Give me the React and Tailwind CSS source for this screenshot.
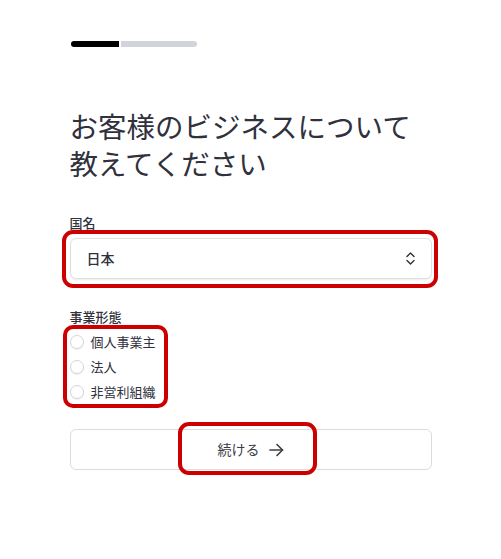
import React from "react";

function Chevrons() {
  return (
    <svg width="9" height="13" viewBox="0 0 9 13" fill="none" stroke="#30313d" strokeWidth="1.4" strokeLinecap="round" strokeLinejoin="round">
      <path d="M1 4.5 L4.5 1 L8 4.5" />
      <path d="M1 8.5 L4.5 12 L8 8.5" />
    </svg>
  );
}

function Arrow() {
  return (
    <svg width="15" height="14" viewBox="0 0 15 14" fill="none" stroke="#3c3c44" strokeWidth="1.6" strokeLinecap="round" strokeLinejoin="round">
      <path d="M1 7 H13.5" />
      <path d="M8 1.5 L13.5 7 L8 12.5" />
    </svg>
  );
}

function Radio({ label }) {
  return (
    <div className="flex h-[25px] items-center gap-[7px]">
      <span className="h-[14px] w-[14px] rounded-full border border-[#d5d5d9] bg-white shadow-[0_1px_1px_rgba(0,0,0,0.06)]" />
      <span className="text-[13px] leading-4 text-[#30313d]">{label}</span>
    </div>
  );
}

export default function App() {
  return (
    <div
      className="min-h-[559px] w-full bg-white"
      style={{ fontFamily: '"Noto Sans CJK JP", "Noto Sans", sans-serif' }}
    >
      <div className="mx-auto flex w-[362px] flex-col pt-[41px]">
        <div className="ml-[1px] flex h-[6px] w-[126px] overflow-hidden rounded-full">
          <div className="h-full w-[48px] bg-black" />
          <div className="h-full w-[2px] bg-white" />
          <div className="h-full flex-1 bg-[#d1d5db]" />
        </div>

        <h1 className="mt-[60px] text-[28.5px] font-normal leading-[37px] text-[#30313d]">
          お客様のビジネスについて
          <br />
          教えてください
        </h1>

        <div className="mt-[34px] text-[13px] font-medium leading-4 text-[#30313d]">国名</div>

        <div className="relative mt-[7px]">
          <div className="flex h-[41px] items-center justify-between rounded-md border border-[#e0e0e3] bg-white pl-[16px] pr-[16px] shadow-[0_1px_2px_rgba(0,0,0,0.08)]">
            <span className="text-[14px] font-medium text-[#30313d]">日本</span>
            <Chevrons />
          </div>
          <div className="pointer-events-none absolute left-[-8px] right-[-6px] top-[-8px] bottom-[-9px] rounded-[11px] border-4 border-[#cc0000]" />
        </div>

        <div className="mt-[30px] text-[13px] font-medium leading-4 text-[#30313d]">事業形態</div>

        <div className="relative mt-[4px] flex flex-col self-start">
          <Radio label="個人事業主" />
          <Radio label="法人" />
          <Radio label="非営利組織" />
          <div className="pointer-events-none absolute left-[-7px] top-[-4px] bottom-[-4px] w-[105px] rounded-[10px] border-4 border-[#cc0000]" />
        </div>

        <div className="relative mt-[25px]">
          <button className="flex h-[41px] w-full items-center justify-center gap-[9px] rounded-md border border-[#dcdce0] bg-white text-[14px] text-[#3c3c44]">
            <span>続ける</span>
            <Arrow />
          </button>
          <div className="pointer-events-none absolute left-[108px] top-[-7px] h-[53px] w-[139px] rounded-[11px] border-4 border-[#cc0000]" />
        </div>
      </div>
    </div>
  );
}
